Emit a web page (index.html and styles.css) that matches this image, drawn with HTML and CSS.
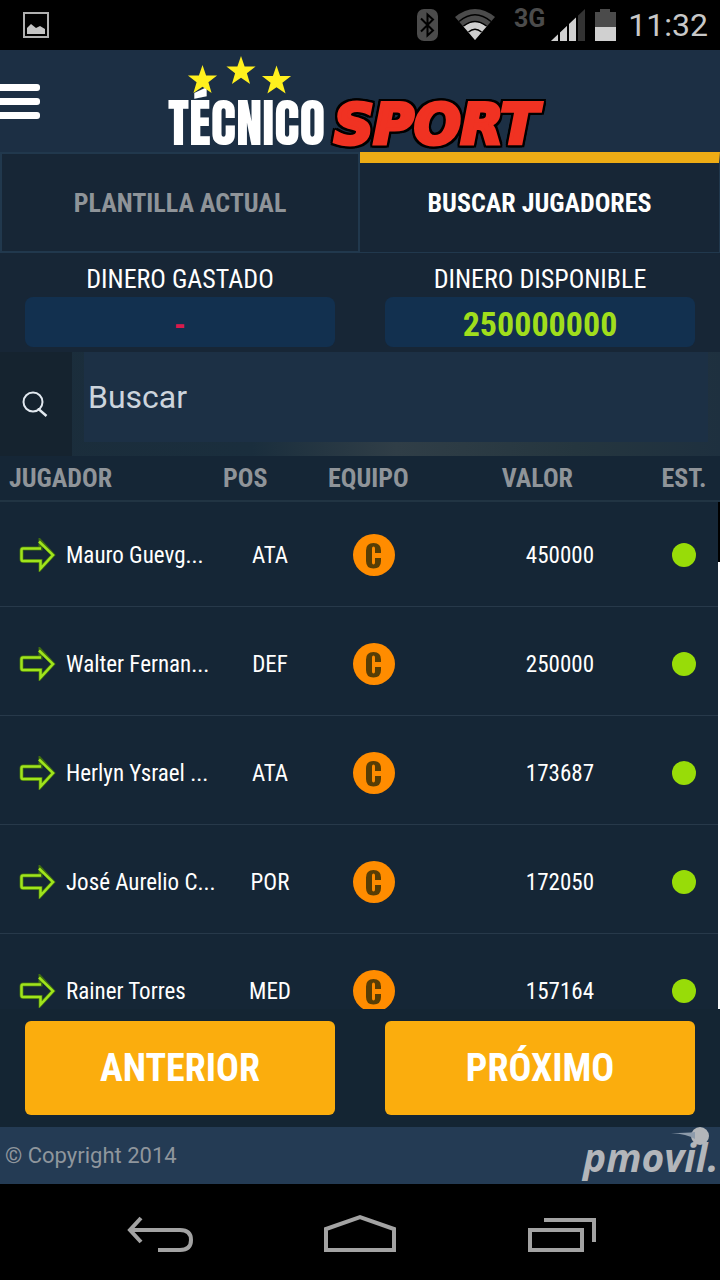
FILE: index.html
```html
<!DOCTYPE html>
<html lang="es">
<head>
<meta charset="utf-8">
<meta name="viewport" content="width=device-width, initial-scale=1">
<title>Técnico Sport</title>
<link rel="stylesheet" href="styles.css">
</head>
<body>
<svg class="defs" aria-hidden="true">
  <symbol id="arrow" viewBox="0 0 38 34">
    <path d="M4 10.500h17.500V3.500L34 17 21.500 30.500V23H4Q2.500 23 2.500 21V12.500Q2.500 10.500 4 10.500Z" fill="none" stroke="#3f6d12" stroke-width="4"/>
    <path d="M20 3.500L34 17 21.500 30.500V23H4Q2.500 23 2.500 21V12.500Q2.500 10.500 4 10.500H22" fill="none" stroke="#a0e41c" stroke-width="2.500"/>
  </symbol>
  <symbol id="club" viewBox="0 0 42 42">
    <circle cx="21" cy="21" r="21" fill="#ff8c00"/>
    <path d="M28 19h-6v-4.500q0-2-1.500-2t-1.500 2v14q0 2 1.500 2t1.500-2V24h6v3q0 7.500-7.500 7.500T13 27V16.500Q13 9 20.500 9t7.500 7.500z" fill="#573d05"/>
  </symbol>
</svg>
<div class="app">
  <div class="status">
    <svg class="status-photo" viewBox="0 0 26 26" width="26" height="26"><rect x="1" y="1" width="24" height="24" fill="none" stroke="#b0b0b0" stroke-width="2"/><path d="M4 22V16l4-4 5 4 4-2 5 3v5z" fill="#c4c4c4"/></svg>
    <svg width="22" height="33" viewBox="0 0 22 33"><rect width="21" height="32" rx="7" fill="#4b4b4b"/><path d="M4 9.500l12 12-5.500 5V5.500l5.500 5-12 12" fill="none" stroke="#000" stroke-width="2"/></svg>
    <svg class="wifi" width="40" height="32" viewBox="0 0 40 32"><path d="M0 8Q20-8 40 8L20 31z" fill="#4b4b4b"/><path d="M8.500 17.500Q20 8.500 31.500 17.500L20 31z" fill="#d0d0d0"/><path d="M4 12.500Q20-1 36 12.500M8.500 17Q20 8 31.500 17M13.500 23Q20 17.500 26.500 23" fill="none" stroke="#000" stroke-width="1.500"/></svg>
    <span class="net">3G</span>
    <svg width="34" height="33" viewBox="0 0 34 33"><path d="M0 32L34 0V32z" fill="#333"/><path d="M0 32L25.500 8V32z" fill="#d0d0d0"/><path d="M8 0v33M17 0v33M26 0v33" stroke="#000" stroke-width="2"/></svg>
    <svg class="battery" width="21" height="32" viewBox="0 0 21 32"><path d="M0 3h5V0h10v3h6v29H0z" fill="#4b4b4b"/><path d="M0 18h21v14H0z" fill="#d0d0d0"/></svg>
    <span class="clock">11:32</span>
  </div>

  <header class="header">
    <button class="menu" aria-label="Menú"><span class="bar"></span><span class="bar"></span><span class="bar"></span></button>
    <svg class="logo" viewBox="0 0 390 100" role="img" aria-label="Técnico Sport">
      <text class="logo-tecnico" x="3" y="94">TÉCNICO</text>
      <text class="logo-sport" x="169" y="92">SPORT</text>
      <g fill="#fff01e">
        <path d="M37.500 14l3.600 10.400 11 .2-8.700 6.700 3.200 10.700-9.100-6.300-9.100 6.300 3.200-10.700-8.700-6.700 11-.2z"/>
        <path d="M76 5l3.600 10.400 11 .2-8.700 6.700 3.200 10.700L76 26.700 66.900 33l3.200-10.700-8.700-6.700 11-.2z"/>
        <path d="M111.500 14.500l3.600 10.400 11 .2-8.700 6.700 3.200 10.700-9.100-6.300-9.100 6.300 3.200-10.700-8.700-6.700 11-.2z"/>
      </g>
    </svg>
  </header>

  <nav class="tabs">
    <a class="tab" href="#plantilla">PLANTILLA ACTUAL</a>
    <a class="tab tab-active" href="#buscar">BUSCAR JUGADORES</a>
  </nav>

  <section class="money">
    <div class="money-item"><span>DINERO GASTADO</span><strong class="amount spent">-</strong></div>
    <div class="money-item"><span>DINERO DISPONIBLE</span><strong class="amount available">250000000</strong></div>
  </section>

  <form class="search">
    <button class="search-btn" type="button" aria-label="Buscar jugador"><svg width="28" height="28" viewBox="0 0 28 28" fill="none" stroke="#e2e9f0" stroke-width="2"><circle cx="11" cy="12" r="9.500"/><path d="M17 18v1.500L24.500 26" stroke-width="2.500"/></svg></button>
    <input class="search-input" type="text" placeholder="Buscar" aria-label="Buscar">
  </form>

  <main class="list">
    <table class="players">
      <colgroup><col class="c-name"><col class="c-pos"><col class="c-team"><col class="c-value"><col class="c-state"></colgroup>
      <thead><tr><th class="h-name">JUGADOR</th><th class="h-pos">POS</th><th class="h-team">EQUIPO</th><th class="h-value">VALOR</th><th>EST.</th></tr></thead>
      <tbody>
        <tr><td><a class="player" href="#p1"><svg class="arrow"><use href="#arrow"/></svg>Mauro Guevg...</a></td><td>ATA</td><td><svg class="club"><use href="#club"/></svg></td><td class="value">450000</td><td><span class="dot"></span></td></tr>
        <tr><td><a class="player" href="#p2"><svg class="arrow"><use href="#arrow"/></svg>Walter Fernan...</a></td><td>DEF</td><td><svg class="club"><use href="#club"/></svg></td><td class="value">250000</td><td><span class="dot"></span></td></tr>
        <tr><td><a class="player" href="#p3"><svg class="arrow"><use href="#arrow"/></svg>Herlyn Ysrael ...</a></td><td>ATA</td><td><svg class="club"><use href="#club"/></svg></td><td class="value">173687</td><td><span class="dot"></span></td></tr>
        <tr><td><a class="player" href="#p4"><svg class="arrow"><use href="#arrow"/></svg>José Aurelio C...</a></td><td>POR</td><td><svg class="club"><use href="#club"/></svg></td><td class="value">172050</td><td><span class="dot"></span></td></tr>
        <tr><td><a class="player" href="#p5"><svg class="arrow"><use href="#arrow"/></svg>Rainer Torres</a></td><td>MED</td><td><svg class="club"><use href="#club"/></svg></td><td class="value">157164</td><td><span class="dot"></span></td></tr>
      </tbody>
    </table>
    <span class="scroll"></span>
  </main>

  <div class="pager"><button class="page-btn">ANTERIOR</button><button class="page-btn">PRÓXIMO</button></div>

  <footer class="footer">
    <span>© Copyright 2014</span>
    <svg class="brand" viewBox="0 0 140 57" role="img" aria-label="pmovil"><text class="brand-text" x="3" y="45">pmovil.</text><circle cx="120" cy="9" r="9" fill="#b3b6ba"/><path d="M91 6q16 0 24-1v7q-8-5-24-6z" fill="#8d9bab"/></svg>
  </footer>

  <nav class="android">
    <button class="key" aria-label="Atrás"><svg width="68" height="40" viewBox="0 0 68 40"><path d="M16 4L5 16 16 28M5 16H55Q66 16 66 26T55 36H33" fill="none" stroke="#a3a3a3" stroke-width="4"/></svg></button>
    <button class="key" aria-label="Inicio"><svg width="74" height="40" viewBox="0 0 74 40"><path d="M3 36V15L37 3 71 15V36z" fill="none" stroke="#a3a3a3" stroke-width="4"/></svg></button>
    <button class="key" aria-label="Recientes"><svg width="70" height="40" viewBox="0 0 70 40"><path d="M3 16H55V36H3zM17 6H67V28" fill="none" stroke="#a3a3a3" stroke-width="4"/></svg></button>
  </nav>
</div>
</body>
</html>
```
FILE: styles.css
```css
* { box-sizing: border-box; }
body { margin: 0; background: #152534; font-family: "Roboto Condensed", "Arial Narrow", "Liberation Sans", sans-serif; font-size: 26px; color: #fff; }
button { border: 0; padding: 0; background: none; font: inherit; color: inherit; }
a { color: inherit; text-decoration: none; }
svg { display: block; flex: none; }
.defs { position: absolute; width: 0; height: 0; }
.app { display: flex; flex-direction: column; height: 100vh; }
.app > * { flex: none; }

.status { display: flex; align-items: center; height: 50px; padding: 0 12px 0 23px; background: #000; font-family: Roboto, sans-serif; }
.status-photo { margin-right: auto; }
.wifi { margin-left: 16px; }
.net { margin: 0 6px 12px 19px; font-size: 25px; line-height: 28px; font-weight: 700; color: #4b4b4b; }
.battery { margin: 0 12px 0 10px; }
.clock { font-size: 32px; color: #c8c8c8; }

.header { display: grid; grid-template-columns: 40px 1fr 40px; align-items: center; height: 102px; background: #1c2f44; }
.menu { display: grid; gap: 7px; }
.bar { height: 7px; border-radius: 0 3px 3px 0; background: #fff; }
.logo { width: 390px; height: 100px; justify-self: center; overflow: visible; }
.logo-tecnico { font-family: Anton, "Roboto Condensed", sans-serif; font-size: 53px; fill: #fff; }
.logo-sport { font-family: "DejaVu Sans", sans-serif; font-size: 55px; font-weight: 700; font-style: oblique; fill: #f03222; stroke: #f03222; stroke-width: 4px; filter: drop-shadow(2px 0 #000) drop-shadow(-2px 0 #000) drop-shadow(0 2px #000) drop-shadow(0 -2px #000); }

.tabs { display: grid; grid-template-columns: 1fr 1fr; height: 101px; }
.tab { display: flex; align-items: center; justify-content: center; border: 2px solid #21384d; background: #172636; color: #8f9499; font-weight: 700; }
.tab-active { border-width: 11px 1px 1px 0; border-top-color: #eeac15; padding-bottom: 10px; color: #fff; }

.money { display: grid; grid-template-columns: 1fr 1fr; gap: 50px; height: 99px; padding: 10px 25px 5px; background: #172636; }
.money-item { display: flex; flex-direction: column; text-align: center; line-height: 32px; }
.amount { height: 50px; margin-top: 2px; border-radius: 8px; background: #12304f; font-size: 34px; line-height: 54px; }
.spent { color: #d81a4c; }
.available { color: #a0de1c; }

.search { display: flex; height: 104px; padding-right: 12px; background: linear-gradient(90deg, #1b2d3b, #1a2e3d 35%, #303e47 55%, #25363f 80%, #1e303f); }
.search-btn { display: grid; place-items: center; width: 72px; margin-right: 12px; background: #15232f; }
.search-input { flex: 1; min-width: 0; height: 90px; padding: 0 4px; border: 0; background: #1c3045; font: 32px Roboto, sans-serif; color: #ccd4dc; }
.search-input::placeholder { color: #ccd4dc; opacity: 1; }

.app > .list { position: relative; flex: 1; min-height: 0; overflow: hidden; background: #152636; }
.players { width: 100%; table-layout: fixed; border-collapse: separate; border-spacing: 0; text-align: center; font-size: 23px; }
.c-name { width: 30%; }
.c-pos { width: 15%; }
.c-team { width: 14%; }
.c-value { width: 31%; }
.c-state { width: 10%; }
th { height: 46px; padding: 0; border-bottom: 2px solid #213443; color: #8f9499; font-size: 26px; text-align: center; }
.h-name { padding-left: 9px; text-align: left; }
.h-pos { padding-left: 7px; text-align: left; }
.h-team { padding-left: 4px; text-align: left; }
.h-value { padding-right: 75px; text-align: right; }
td { height: 109px; padding: 6px 0 0; border-bottom: 1px solid #27394a; }
tr:first-child td { height: 105px; padding-top: 2px; }
.player { display: flex; align-items: center; gap: 9px; padding-left: 19px; white-space: nowrap; }
.arrow { width: 38px; height: 34px; }
.club { width: 42px; height: 42px; margin: 0 auto; }
.players .value { padding-right: 54px; text-align: right; }
.dot { display: block; width: 24px; height: 24px; margin: 0 auto; border-radius: 50%; background: #98dc08; }
.scroll { position: absolute; top: 46px; right: 0; bottom: 0; width: 2px; background: linear-gradient(#000 60px, #fff 60px); }

.pager { display: grid; grid-template-columns: 1fr 1fr; gap: 50px; padding: 12px 25px; background: #142533; }
.page-btn { height: 94px; border-radius: 6px; background: #fbad0d; font-size: 38px; font-weight: 700; }
.footer { display: flex; align-items: center; justify-content: space-between; height: 57px; padding-left: 5px; background: #243b54; color: #8f969d; font-family: Roboto, sans-serif; font-size: 22px; }
.brand { width: 140px; height: 57px; }
.brand-text { font-family: "Open Sans", sans-serif; font-size: 39px; font-weight: 700; font-style: italic; fill: #b3b6ba; }
.android { display: flex; justify-content: center; gap: 130px; height: 96px; padding: 4px 0 0 2px; background: #000; }
```
